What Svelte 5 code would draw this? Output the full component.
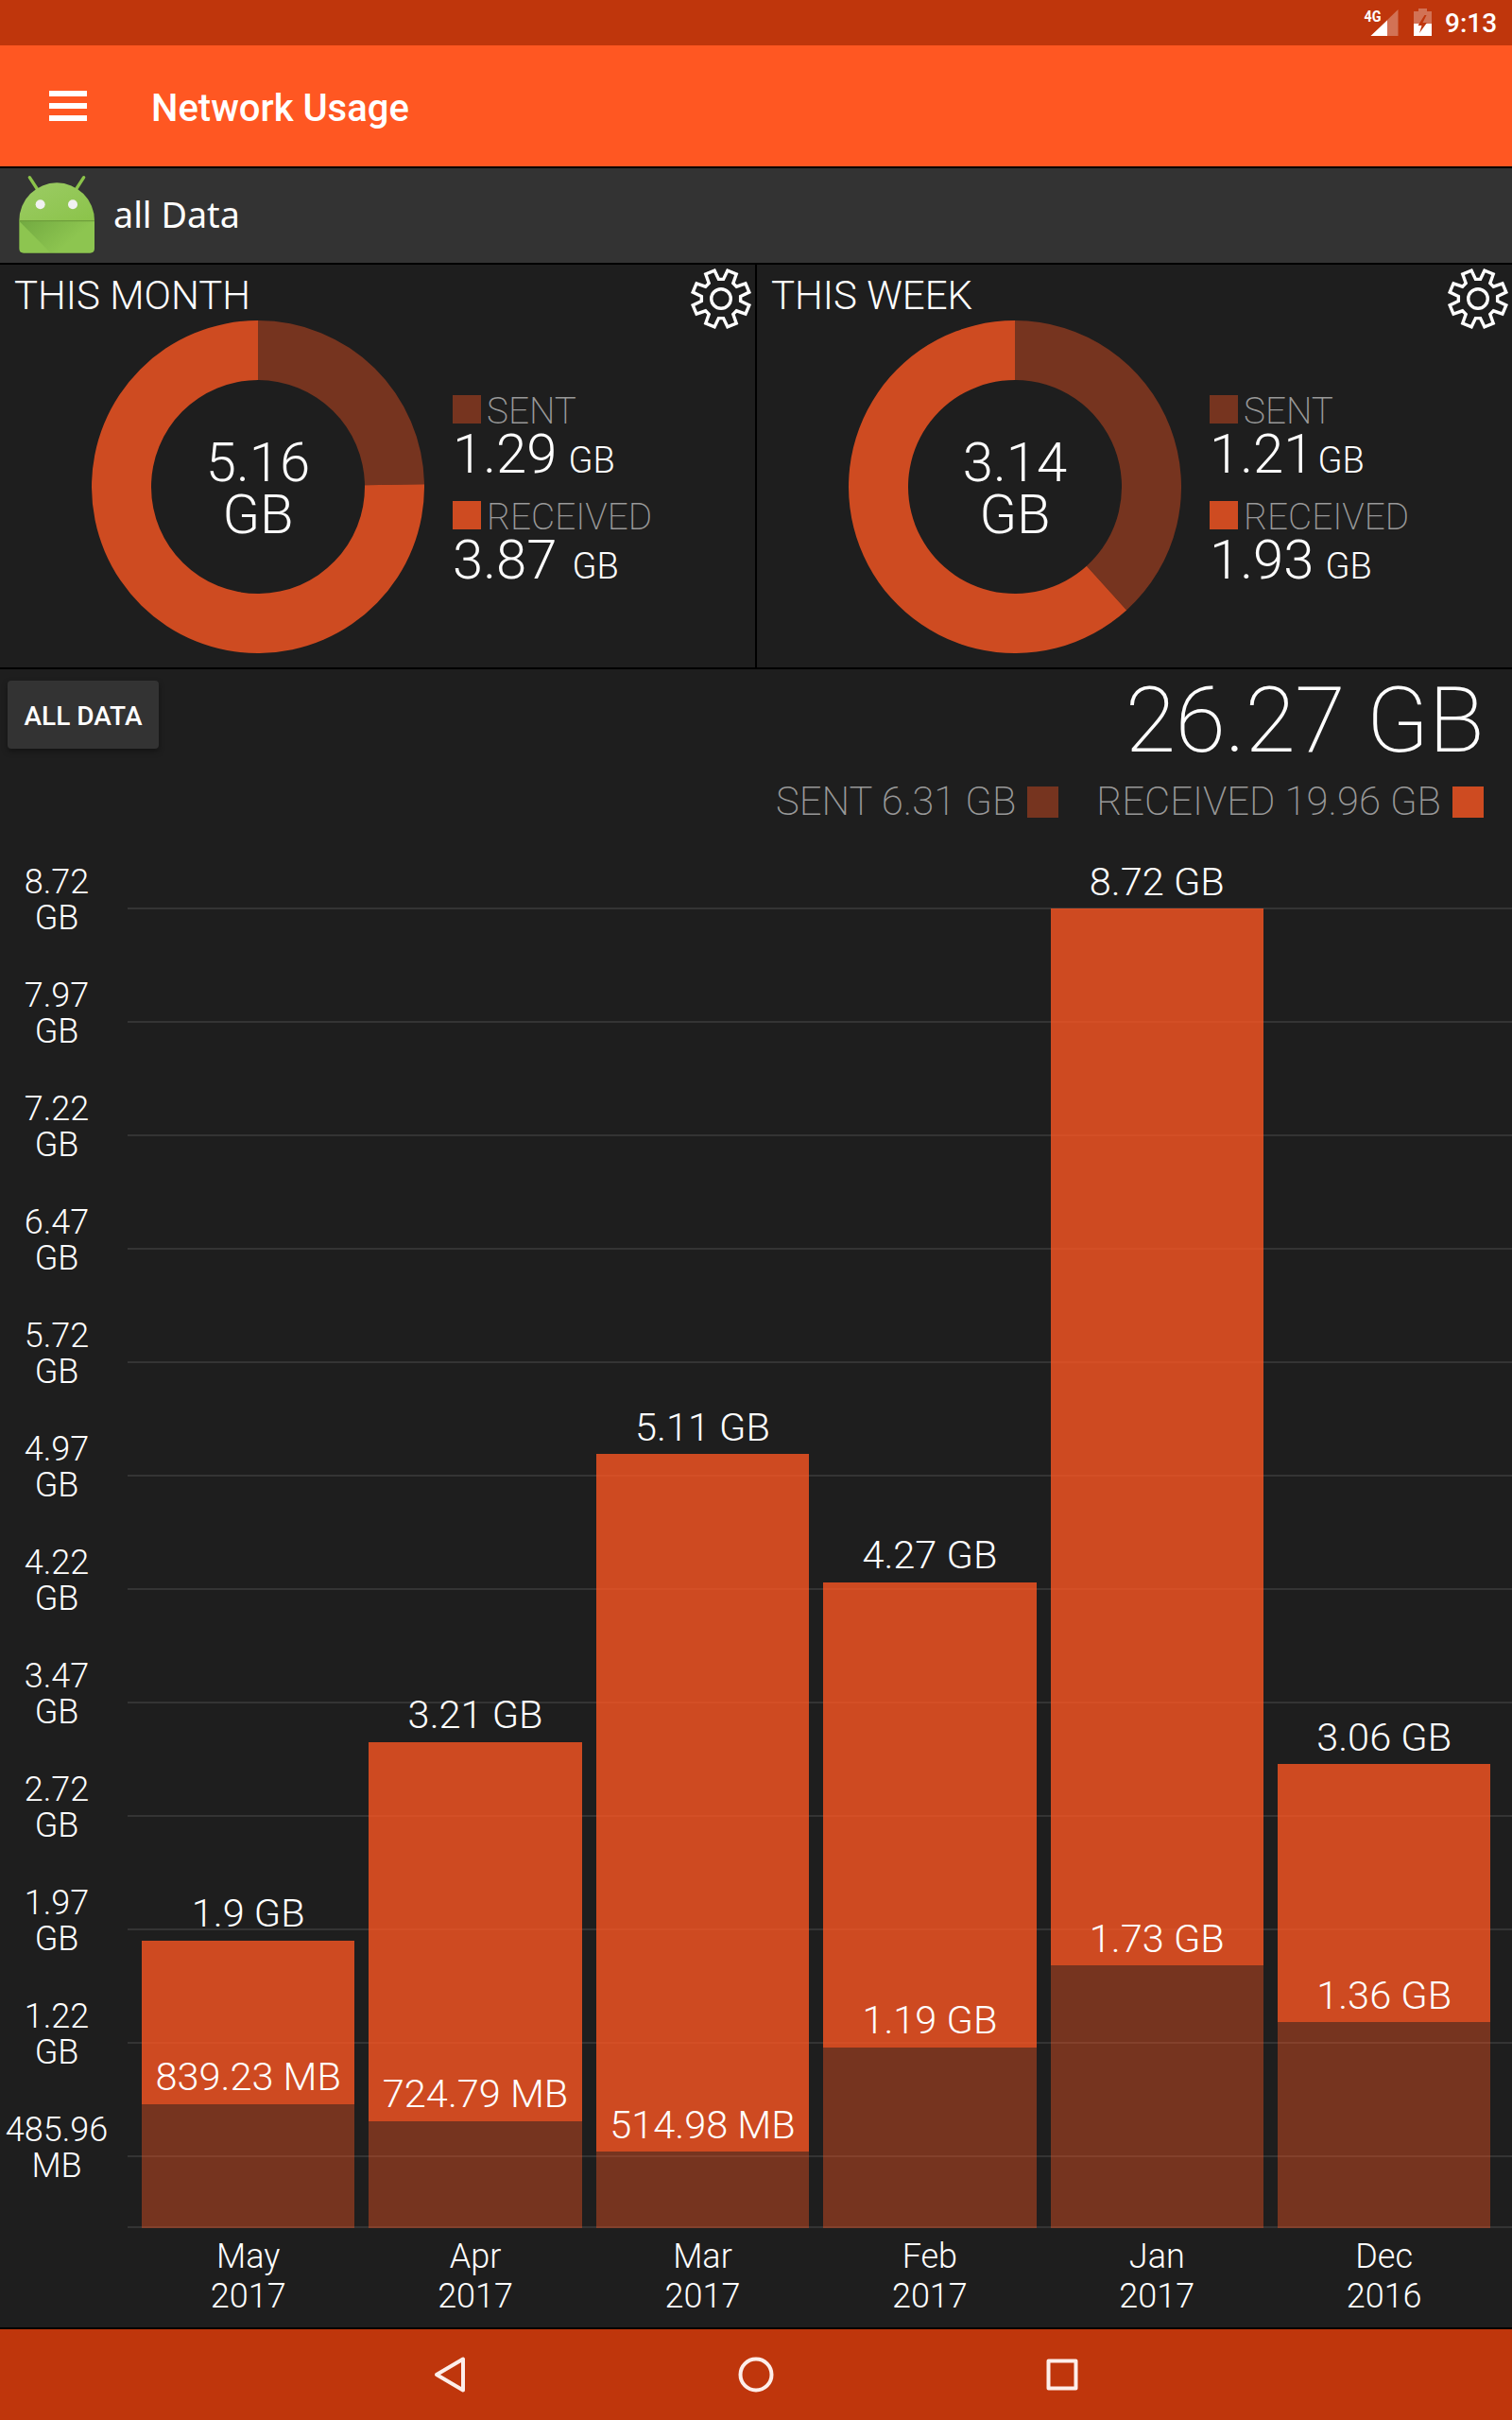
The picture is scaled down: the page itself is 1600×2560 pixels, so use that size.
<script lang="ts">
  interface Usage {
    title: string;
    total: string;
    sent: number;
    received: number;
    // px between the number and its unit
    sentGap: number;
    receivedGap: number;
  }

  interface Month {
    month: string;
    year: string;
    total: number;
    totalLabel: string;
    sent: number;
    sentLabel: string;
  }

  const panels: Usage[] = [
    { title: 'THIS MONTH', total: '5.16', sent: 1.29, received: 3.87, sentGap: 12, receivedGap: 16 },
    { title: 'THIS WEEK', total: '3.14', sent: 1.21, received: 1.93, sentGap: 4, receivedGap: 12 }
  ];

  // values in GB
  const months: Month[] = [
    { month: 'May', year: '2017', total: 1.9, totalLabel: '1.9 GB', sent: 0.82, sentLabel: '839.23 MB' },
    { month: 'Apr', year: '2017', total: 3.213, totalLabel: '3.21 GB', sent: 0.708, sentLabel: '724.79 MB' },
    { month: 'Mar', year: '2017', total: 5.115, totalLabel: '5.11 GB', sent: 0.503, sentLabel: '514.98 MB' },
    { month: 'Feb', year: '2017', total: 4.267, totalLabel: '4.27 GB', sent: 1.194, sentLabel: '1.19 GB' },
    { month: 'Jan', year: '2017', total: 8.72, totalLabel: '8.72 GB', sent: 1.735, sentLabel: '1.73 GB' },
    { month: 'Dec', year: '2016', total: 3.065, totalLabel: '3.06 GB', sent: 1.36, sentLabel: '1.36 GB' }
  ];

  const ticks = ['8.72 GB', '7.97 GB', '7.22 GB', '6.47 GB', '5.72 GB', '4.97 GB', '4.22 GB', '3.47 GB', '2.72 GB', '1.97 GB', '1.22 GB', '485.96 MB'];

  const plotHeight = 1396;
  const scale = plotHeight / 8.72;

  function polar(r: number, deg: number) {
    const a = (deg * Math.PI) / 180;
    return `${(r * Math.sin(a)).toFixed(2)} ${(-r * Math.cos(a)).toFixed(2)}`;
  }

  // Ring segment, angles clockwise from the top
  function arc(from: number, to: number) {
    const large = to - from > 180 ? 1 : 0;
    return `M${polar(176, from)} A176 176 0 ${large} 1 ${polar(176, to)} L${polar(113, to)} A113 113 0 ${large} 0 ${polar(113, from)} Z`;
  }

  function sentAngle(p: Usage) {
    return (p.sent / (p.sent + p.received)) * 360 - 0.9;
  }

  const gearPoints = Array.from({ length: 8 }, (_, i) => i * 45)
    .flatMap(a => [polar(20.8, a - 7), polar(20.8, a + 7), polar(30.6, a + 13), polar(30.6, a + 32)])
    .join(' ');
</script>

<div class="screen">
  <div class="status-bar">
    <svg width="110" height="48" viewBox="1420 0 110 48">
      <text x="1443.5" y="23" class="net" textLength="18" lengthAdjust="spacingAndGlyphs">4G</text>
      <path d="M1479.5 10v28h-29z" fill="#fff" opacity=".3" />
      <path d="M1468 21.5v16.500h-17.500z" fill="#fff" />
      <path d="M1501 9h9v3h5v13h-19v-13h5z" fill="#fff" opacity=".3" />
      <path d="M1496 25h19v13h-19z" fill="#fff" />
      <path d="M1507.500 16l-7 11h4l-2.500 8 8-11h-4.500l4-8z" fill="#bf360c" />
    </svg>
    <span class="clock">9:13</span>
  </div>

  <header class="app-bar">
    <svg width="40" height="32" viewBox="0 0 40 32" fill="#fff">
      <path d="M0 0h40v6H0zM0 13h40v6H0zM0 26h40v6H0z" />
    </svg>
    <h1>Network Usage</h1>
  </header>

  <div class="source">
    <svg class="robot" width="84" height="92" viewBox="54 552 252 276">
      <defs>
        <linearGradient id="head" x1="0" y1="0" x2="1" y2="1">
          <stop offset="0" stop-color="#9ccc65" />
          <stop offset="1" stop-color="#8bc34a" />
        </linearGradient>
        <linearGradient id="shade" x1="0" y1="0" x2="1" y2=".5">
          <stop offset="0" stop-color="#33691e" stop-opacity=".3" />
          <stop offset=".8" stop-color="#33691e" stop-opacity="0" />
        </linearGradient>
      </defs>
      <path d="M61 705h239v86q0 14-14 14H75q-14 0-14-14z" fill="#222" opacity=".4" />
      <path d="M94 563l26 40M266 563l-26 40" stroke="#8bc34a" stroke-width="10" stroke-linecap="round" />
      <path d="M61 700a119.500 120 0 0 1 239 0z" fill="url(#head)" />
      <path d="M61 700h239v89q0 14-14 14H75q-14 0-14-14z" fill="#8dc550" />
      <path d="M61 702l100 101h125q14 0 14-14v-87z" fill="url(#shade)" />
      <path d="M61 701h239" stroke="#6f9e3c" stroke-width="4" />
      <circle cx="128" cy="649" r="15" fill="#f1f1f1" />
      <circle cx="231" cy="649" r="15" fill="#f1f1f1" />
    </svg>
    <span>all Data</span>
  </div>

  <div class="panels">
    {#each panels as panel}
      <section class="panel">
        <div class="panel-head">
          <h2>{panel.title}</h2>
          <svg class="gear" width="72" height="72" viewBox="-36 -36 72 72" fill="none" stroke="#fff" stroke-width="3.4">
            <polygon points={gearPoints} />
            <circle r="10.300" />
          </svg>
        </div>
        <div class="panel-body">
          <svg width="352" height="352" viewBox="-176 -176 352 352">
            <path class="sent" d={arc(0, sentAngle(panel))} />
            <path class="received" d={arc(sentAngle(panel), 360)} />
            <text class="donut-text" y="-6">{panel.total}</text>
            <text class="donut-text" y="49">GB</text>
          </svg>
          <div class="legend">
            <div class="legend-label"><i class="swatch sent"></i>SENT</div>
            <div class="legend-value">{panel.sent}<small style="margin-left: {panel.sentGap}px">GB</small></div>
            <div class="legend-label"><i class="swatch received"></i>RECEIVED</div>
            <div class="legend-value">{panel.received}<small style="margin-left: {panel.receivedGap}px">GB</small></div>
          </div>
        </div>
      </section>
    {/each}
  </div>

  <main>
    <div class="summary">
      <button>ALL DATA</button>
      <div class="totals">
        <div class="grand-total">26.27 GB</div>
        <div class="split">
          <span>SENT 6.31 GB</span><i class="swatch sent"></i>
          <span class="second">RECEIVED 19.96 GB</span><i class="swatch received"></i>
        </div>
      </div>
    </div>

    <div class="chart">
      <div class="y-axis">
        {#each ticks as tick}
          <div class="tick">{tick}</div>
        {/each}
      </div>
      <div class="plot">
        <div class="grid-lines">
          {#each ticks as _}
            <div class="line"></div>
          {/each}
          <div class="line base"></div>
        </div>
        <div class="bars">
          {#each months as m}
            <div class="column">
              <div class="bar-label">{m.totalLabel}</div>
              <div class="bar received" style="height: {(m.total - m.sent) * scale}px">
                <div class="bar-label">{m.sentLabel}</div>
              </div>
              <div class="bar sent" style="height: {m.sent * scale}px"></div>
            </div>
          {/each}
        </div>
        <div class="x-axis">
          {#each months as m}
            <div class="x-label">{m.month}<br />{m.year}</div>
          {/each}
        </div>
      </div>
    </div>
  </main>

  <nav>
    <svg width="60" height="60" viewBox="-30 -30 60 60"><path d="M14 -16.500v33L-14 0z" /></svg>
    <svg width="60" height="60" viewBox="-30 -30 60 60"><circle r="16.500" /></svg>
    <svg width="60" height="60" viewBox="-30 -30 60 60"><rect x="-14.500" y="-14.500" width="29" height="29" /></svg>
  </nav>
</div>

<style>
  :global(body) {
    margin: 0;
    background: #000;
  }

  .screen {
    width: 1600px;
    height: 2560px;
    display: flex;
    flex-direction: column;
    overflow: hidden;
    font-family: Roboto, sans-serif;
    font-weight: 300;
    color: #fff;
    background: #000;
  }

  .status-bar {
    height: 48px;
    display: flex;
    justify-content: flex-end;
    padding-right: 17px;
    background: #bf360c;
  }

  .status-bar svg {
    margin-right: -1px;
  }

  .net {
    font-size: 17px;
    font-weight: 700;
    fill: #fff;
  }

  .clock {
    width: 54px;
    font-size: 28px;
    font-weight: 500;
    line-height: 50px;
    white-space: nowrap;
  }

  .app-bar {
    height: 128px;
    display: flex;
    align-items: center;
    gap: 68px;
    padding-left: 52px;
    margin-bottom: 2px;
    background: #ff5722;
  }

  h1 {
    margin: 4px 0 0;
    font-size: 40px;
    font-weight: 500;
  }

  .source {
    height: 100px;
    display: flex;
    align-items: center;
    gap: 18px;
    padding-left: 18px;
    margin-bottom: 2px;
    background: #333;
    font-family: 'Noto Sans', sans-serif;
    font-size: 37.700px;
    font-weight: 400;
  }

  .source span {
    margin-bottom: 3px;
  }

  .robot {
    margin-top: 4px;
  }

  .panels {
    display: flex;
    gap: 2px;
    margin-bottom: 2px;
  }

  .panel {
    flex: none;
    width: 799px;
    height: 426px;
    background: #1e1e1e;
  }

  .panel-head {
    display: flex;
    justify-content: space-between;
    box-sizing: border-box;
    height: 59px;
    padding-left: 15px;
  }

  h2 {
    margin: 6px 0 0;
    font-size: 42px;
    font-weight: 300;
    line-height: 53px;
  }

  .gear {
    flex: none;
  }

  .panel-body {
    display: flex;
    gap: 30px;
    padding-left: 97px;
  }

  .sent {
    fill: #76341f;
    background: #76341f;
  }

  .received {
    fill: #ce4b21;
    background: #ce4b21;
  }

  .donut-text {
    font-size: 58px;
    text-anchor: middle;
    fill: #fff;
  }

  .legend {
    padding-top: 79px;
  }

  .legend-label {
    display: flex;
    gap: 6px;
    height: 30px;
    font-size: 38.700px;
    font-weight: 200;
    line-height: 33px;
    color: #999;
  }

  .swatch {
    width: 30px;
    height: 30px;
    flex: none;
  }

  .legend-value {
    height: 82px;
    font-size: 58px;
    line-height: 64px;
    white-space: nowrap;
  }

  .legend-value small {
    font-size: 38px;
  }

  main {
    height: 1754px;
    margin-bottom: 2px;
    background: #1e1e1e;
  }

  .summary {
    display: flex;
    justify-content: space-between;
    align-items: flex-start;
    height: 192px;
    padding: 0 30px 0 8px;
  }

  button {
    width: 160px;
    height: 72px;
    margin-top: 12px;
    padding: 2px 0 0;
    border: none;
    border-radius: 4px;
    background: #333;
    box-shadow: 0 3px 6px rgba(0, 0, 0, 0.35);
    color: #fff;
    font-family: inherit;
    font-size: 28px;
    font-weight: 500;
  }

  .totals {
    display: flex;
    flex-direction: column;
    align-items: flex-end;
  }

  .grand-total {
    height: 124px;
    font-size: 97px;
    font-weight: 200;
    line-height: 109px;
    letter-spacing: -0.600px;
  }

  .split {
    display: flex;
    height: 33px;
    font-size: 41.800px;
    font-weight: 200;
    line-height: 31px;
    color: #999;
  }

  .split .swatch {
    width: 33px;
    height: 33px;
    margin-left: 12px;
  }

  .second {
    margin-left: 40px;
  }

  .chart {
    display: flex;
  }

  .y-axis {
    width: 120px;
    margin-right: 15px;
    padding-top: 14px;
  }

  .tick {
    height: 120px;
    padding: 0 5px;
    font-size: 36px;
    line-height: 38px;
    text-align: center;
  }

  .plot {
    flex: 1;
    display: grid;
    grid-template-rows: 1457px 97px;
  }

  .grid-lines,
  .bars {
    grid-area: 1 / 1;
  }

  .grid-lines {
    padding-top: 60px;
  }

  .line {
    height: 118px;
    border-top: 2px solid #343434;
  }

  .line.base {
    height: 0;
    margin-top: -45px;
  }

  .bars,
  .x-axis {
    display: flex;
    gap: 15px;
    padding-left: 15px;
  }

  .bars {
    align-items: flex-end;
  }

  .column {
    width: 225.400px;
  }

  .bar-label {
    height: 45px;
    margin-bottom: 6.500px;
    font-size: 41.500px;
    line-height: 45px;
    text-align: center;
    white-space: nowrap;
  }

  .bar {
    display: flex;
    flex-direction: column;
    justify-content: flex-end;
  }

  .bar.received {
    background: rgba(255, 87, 34, 0.784);
  }

  .bar.sent {
    background: rgba(255, 87, 34, 0.392);
  }

  .x-label {
    width: 225.400px;
    padding-top: 9px;
    font-size: 36px;
    line-height: 42px;
    text-align: center;
  }

  nav {
    height: 96px;
    display: flex;
    justify-content: center;
    align-items: center;
    gap: 264px;
    background: #bf360c;
  }

  nav svg {
    fill: none;
    stroke: #fdeeea;
    stroke-width: 4;
    stroke-linejoin: round;
  }
</style>
